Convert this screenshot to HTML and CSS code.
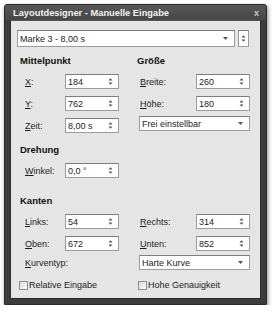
FILE: index.html
```html
<!DOCTYPE html>
<html lang="de">
<head>
  <meta charset="UTF-8">
  <title>Layoutdesigner - Manuelle Eingabe</title>
  <link rel="stylesheet" href="styles.css">
</head>
<body>
  <div class="window">
    <!-- Titelleiste -->
    <div class="titlebar">
      <span class="title">Layoutdesigner - Manuelle Eingabe</span>
      <span class="close">x</span>
    </div>

    <div class="content">
      <!-- Auswahl der Marke -->
      <div class="marker-row">
        <div class="combo combo-wide">
          <span>Marke 3 - 8,00 s</span>
          <svg class="arrow" width="5" height="3" viewBox="0 0 5 3"><path d="M0 0H5L2.5 3Z" fill="#555"/></svg>
        </div>
        <div class="spin-box">
          <svg width="5" height="9" viewBox="0 0 5 9"><path d="M0.5 3.5L2.5 1.2 4.5 3.5Z M0.5 5.5L2.5 7.8 4.5 5.5Z" fill="#555"/></svg>
        </div>
      </div>

      <!-- Mittelpunkt / Größe -->
      <div class="grid grid-first">
        <h2>Mittelpunkt</h2>
        <h2>Größe</h2>

        <div class="field field-left">
          <label><u>X</u>:</label>
          <div class="spin"><span>184</span><svg width="5" height="9" viewBox="0 0 5 9"><path d="M0.5 3.5L2.5 1.2 4.5 3.5Z M0.5 5.5L2.5 7.8 4.5 5.5Z" fill="#555"/></svg></div>
        </div>
        <div class="field field-right">
          <label><u>B</u>reite:</label>
          <div class="spin"><span>260</span><svg width="5" height="9" viewBox="0 0 5 9"><path d="M0.5 3.5L2.5 1.2 4.5 3.5Z M0.5 5.5L2.5 7.8 4.5 5.5Z" fill="#555"/></svg></div>
        </div>

        <div class="field field-left">
          <label><u>Y</u>:</label>
          <div class="spin"><span>762</span><svg width="5" height="9" viewBox="0 0 5 9"><path d="M0.5 3.5L2.5 1.2 4.5 3.5Z M0.5 5.5L2.5 7.8 4.5 5.5Z" fill="#555"/></svg></div>
        </div>
        <div class="field field-right">
          <label><u>H</u>öhe:</label>
          <div class="spin"><span>180</span><svg width="5" height="9" viewBox="0 0 5 9"><path d="M0.5 3.5L2.5 1.2 4.5 3.5Z M0.5 5.5L2.5 7.8 4.5 5.5Z" fill="#555"/></svg></div>
        </div>

        <div class="field field-left">
          <label><u>Z</u>eit:</label>
          <div class="spin"><span>8,00 s</span><svg width="5" height="9" viewBox="0 0 5 9"><path d="M0.5 3.5L2.5 1.2 4.5 3.5Z M0.5 5.5L2.5 7.8 4.5 5.5Z" fill="#555"/></svg></div>
        </div>
        <div class="field field-right field-combo">
          <div class="combo combo-col">
            <span>Frei einstellbar</span>
            <svg class="arrow" width="5" height="3" viewBox="0 0 5 3"><path d="M0 0H5L2.5 3Z" fill="#555"/></svg>
          </div>
        </div>
      </div>

      <!-- Drehung -->
      <div class="grid grid-turn">
        <h2>Drehung</h2>
        <div></div>
        <div class="field field-left">
          <label><u>W</u>inkel:</label>
          <div class="spin"><span>0,0 °</span><svg width="5" height="9" viewBox="0 0 5 9"><path d="M0.5 3.5L2.5 1.2 4.5 3.5Z M0.5 5.5L2.5 7.8 4.5 5.5Z" fill="#555"/></svg></div>
        </div>
      </div>

      <!-- Kanten -->
      <div class="grid grid-edges">
        <h2>Kanten</h2>
        <div></div>

        <div class="field field-left">
          <label><u>L</u>inks:</label>
          <div class="spin"><span>54</span><svg width="5" height="9" viewBox="0 0 5 9"><path d="M0.5 3.5L2.5 1.2 4.5 3.5Z M0.5 5.5L2.5 7.8 4.5 5.5Z" fill="#555"/></svg></div>
        </div>
        <div class="field field-right">
          <label><u>R</u>echts:</label>
          <div class="spin"><span>314</span><svg width="5" height="9" viewBox="0 0 5 9"><path d="M0.5 3.5L2.5 1.2 4.5 3.5Z M0.5 5.5L2.5 7.8 4.5 5.5Z" fill="#555"/></svg></div>
        </div>

        <div class="field field-left">
          <label><u>O</u>ben:</label>
          <div class="spin"><span>672</span><svg width="5" height="9" viewBox="0 0 5 9"><path d="M0.5 3.5L2.5 1.2 4.5 3.5Z M0.5 5.5L2.5 7.8 4.5 5.5Z" fill="#555"/></svg></div>
        </div>
        <div class="field field-right">
          <label><u>U</u>nten:</label>
          <div class="spin"><span>852</span><svg width="5" height="9" viewBox="0 0 5 9"><path d="M0.5 3.5L2.5 1.2 4.5 3.5Z M0.5 5.5L2.5 7.8 4.5 5.5Z" fill="#555"/></svg></div>
        </div>

        <div class="field field-left field-tight">
          <label class="label-long"><u>K</u>urventyp:</label>
        </div>
        <div class="field field-right field-tight">
          <div class="combo combo-col">
            <span>Harte Kurve</span>
            <svg class="arrow" width="5" height="3" viewBox="0 0 5 3"><path d="M0 0H5L2.5 3Z" fill="#555"/></svg>
          </div>
        </div>
      </div>

      <!-- Optionen -->
      <div class="checks">
        <label class="check"><span class="box"></span>Relative Eingabe</label>
        <label class="check"><span class="box"></span>Hohe Genauigkeit</label>
      </div>
    </div>
  </div>
</body>
</html>
```

FILE: styles.css
```css
/* Grundlayout */
body {
  margin: 0;
  background: #fff;
  font-family: 'Liberation Sans', Arial, sans-serif;
  font-size: 9px;
  color: #1c1c1c;
}

/* Fensterrahmen */
.window {
  box-sizing: border-box;
  margin: 4px 0 0 4px;
  width: 263px;
  height: 301px;
  padding: 0 5px 5px 5px;
  display: flex;
  flex-direction: column;
  background: #3c3c3c;
  border: 1px solid #2a2a2a;
  border-radius: 3px 3px 1px 1px;
  box-shadow: 1px 2px 4px rgba(0, 0, 0, 0.45);
}

.titlebar {
  height: 15px;
  display: flex;
  align-items: center;
  justify-content: space-between;
  margin: 0 -5px;
  padding: 0 7px 0 8px;
  background: linear-gradient(#585858, #464646);
  border-radius: 2px 2px 0 0;
}

.title {
  color: #f2f2f2;
  font-weight: bold;
  font-size: 9.3px;
}

.close {
  color: #c8c8c8;
  font-weight: bold;
  font-size: 9px;
}

/* Inhalt */
.content {
  flex: 1;
  background: #e5e5e5;
  padding: 9px 0 0 6px;
  border: 1px solid #2c2c2c;
  border-top-color: #555;
}

.marker-row {
  display: flex;
  gap: 3px;
}

/* Eingabefelder */
.combo,
.spin,
.spin-box {
  box-sizing: border-box;
  display: flex;
  align-items: center;
  background: #fff;
  border: 1px solid #9c9c9c;
  border-top-color: #7d7d7d;
}

.combo {
  justify-content: space-between;
  height: 15px;
  padding: 0 6px 0 2px;
}

.combo-wide {
  width: 218px;
  height: 17px;
}

.combo-col {
  width: 111px;
  margin-left: -1px;
}

.spin-box {
  width: 11px;
  height: 17px;
  justify-content: center;
}

.spin {
  width: 54px;
  height: 15px;
  justify-content: space-between;
  padding: 0 5px 0 2px;
}

/* Gruppen */
.grid {
  display: grid;
  grid-template-columns: 117px 113px;
  row-gap: 7px;
  padding-left: 3px;
}

.grid-first { margin-top: 8px; }
.grid-turn { margin-top: 11px; }
.grid-edges { margin-top: 17px; }

.grid h2 {
  margin: 0;
  font-size: 9.5px;
  line-height: 12px;
  font-weight: bold;
  color: #111;
}

.field {
  display: flex;
  align-items: center;
  height: 15px;
}

.field-combo { margin-top: -2px; }
.field-tight { margin-top: -3px; }

.field-left { padding-left: 5px; }
.field-right { padding-left: 3px; }

.field-left label { width: 40px; }
.field-right label { width: 56px; }
.field-left .label-long { width: auto; }

/* Kontrollkästchen */
.checks {
  display: grid;
  grid-template-columns: 119px 1fr;
  margin-top: 9px;
  padding-left: 2px;
}

.check {
  display: flex;
  align-items: center;
  gap: 1px;
  height: 12px;
}

.box {
  box-sizing: border-box;
  width: 9px;
  height: 9px;
  border: 1px solid #8e8e8e;
  background: linear-gradient(135deg, #dcdcdc, #fafafa);
}
```
